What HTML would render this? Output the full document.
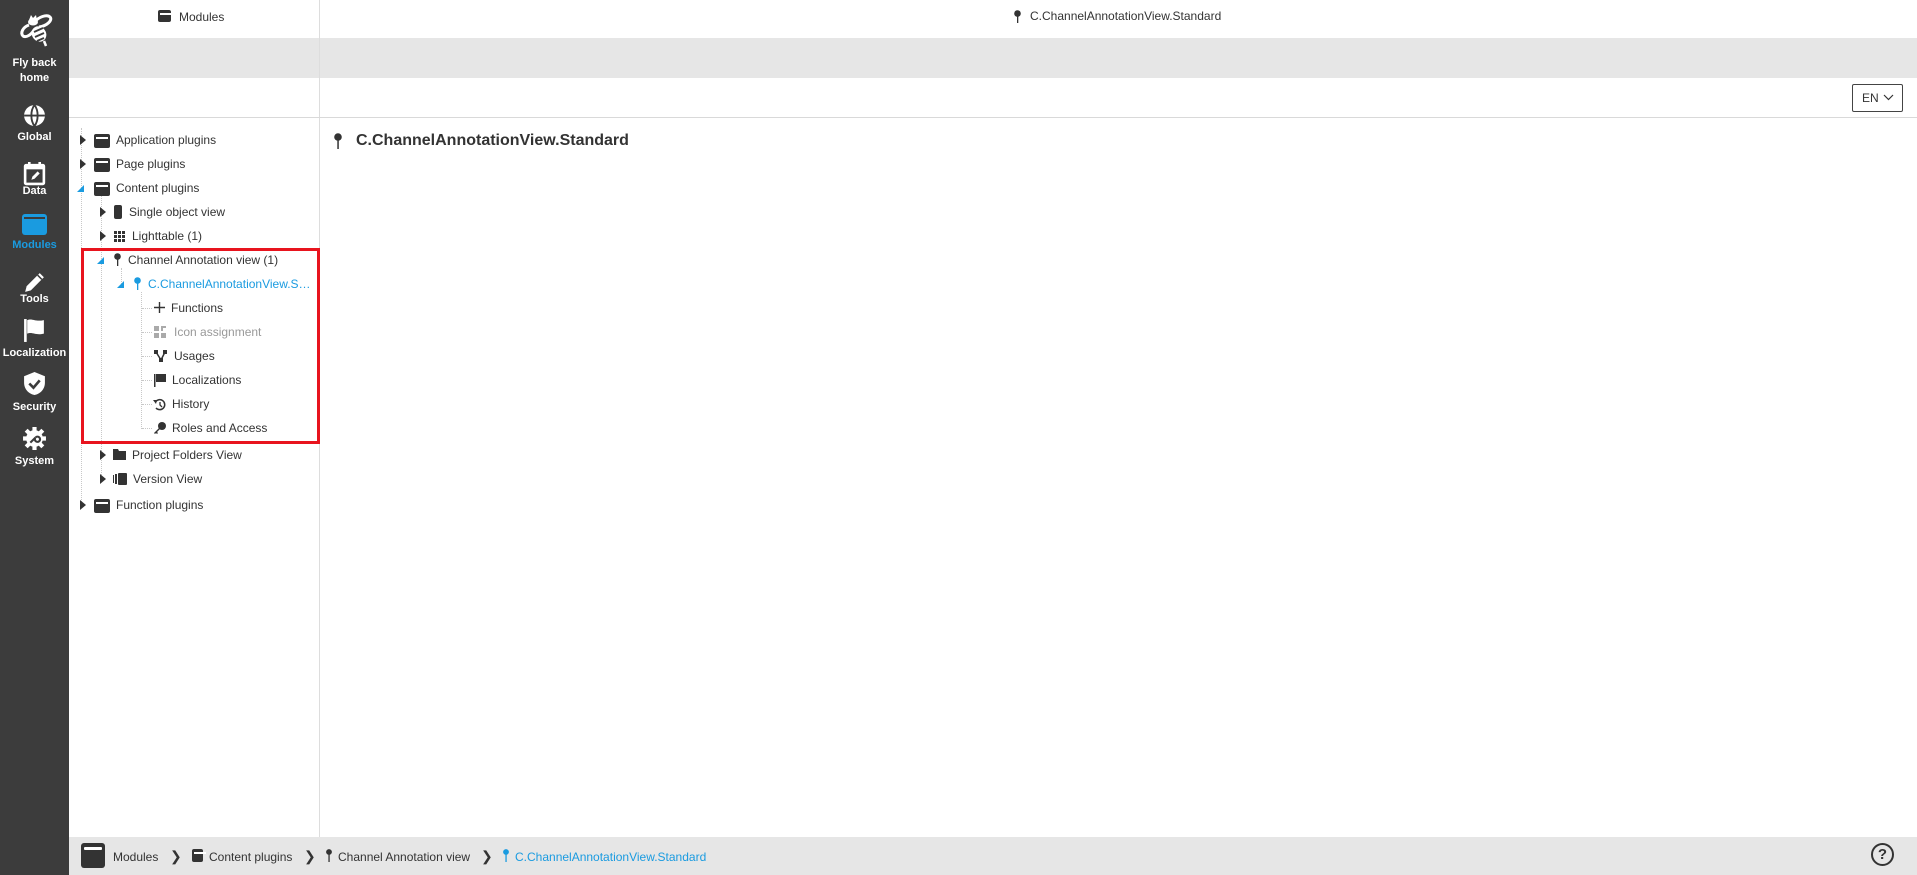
<!DOCTYPE html>
<html><head><meta charset="utf-8"><style>
*{margin:0;padding:0;box-sizing:border-box}
body{width:1917px;height:875px;position:relative;overflow:hidden;background:#fff;font-family:"Liberation Sans",Arial,sans-serif;color:#333}
.a{position:absolute}
#side{left:0;top:0;width:69px;height:875px;background:#3c3c3c}
.sl{position:absolute;left:0;width:69px;text-align:center;color:#fff;font-size:11px;font-weight:bold;line-height:13px}
.si{position:absolute;left:22px;width:25px;height:25px}
.t{position:absolute;font-size:12px;white-space:nowrap;line-height:16px}
.arr{position:absolute;width:0;height:0;border-top:5px solid transparent;border-bottom:5px solid transparent;border-left:6px solid #333}
.opn{position:absolute;width:0;height:0;border-left:7px solid transparent;border-bottom:7px solid #1a9be0}
.mod{position:absolute;width:16px;height:14px;background:#333;border-radius:2px}
.mod:after{content:"";position:absolute;left:2px;top:3px;width:12px;height:2px;background:#fff}
.vl{position:absolute;border-left:1px dotted #c8c8c8}
.hl{position:absolute;border-top:1px dotted #c8c8c8;height:0}
</style></head><body>
<div id="side" class="a">
 <svg class="a" style="left:15px;top:10px" width="40" height="42" viewBox="0 0 40 42">
  <path d="M14 10l2-5 2 3 3-3 1 5z" fill="#fff"/>
  <ellipse cx="18" cy="12" rx="5" ry="3.5" fill="#fff"/>
  <path d="M20 12c3-5 12-8 15-5 3 3-3 9-11 10" fill="none" stroke="#fff" stroke-width="3"/>
  <path d="M14 15c-6 2-9 8-6 11 3 2 8-1 11-6" fill="none" stroke="#fff" stroke-width="3"/>
  <ellipse cx="24" cy="24" rx="7" ry="8" transform="rotate(-35 24 24)" fill="#fff"/>
  <path d="M19 22l9 -4M20 27l9-4M22 31l7-3" stroke="#3c3c3c" stroke-width="1.8"/>
  <path d="M29 31l2 5" stroke="#fff" stroke-width="2.5"/>
 </svg>
 <div class="sl" style="top:57px">Fly back</div>
 <div class="sl" style="top:72px">home</div>
 <svg class="si" style="top:103px" viewBox="0 0 24 24"><circle cx="12" cy="12" r="10" fill="#fff"/><path d="M2 12h20M12 2c-4 5-4 15 0 20M12 2c4 5 4 15 0 20" stroke="#3c3c3c" stroke-width="1.8" fill="none"/></svg>
 <div class="sl" style="top:131px">Global</div>
 <svg class="si" style="top:161px" viewBox="0 0 24 24"><rect x="3" y="4" width="18" height="18" rx="1" fill="none" stroke="#fff" stroke-width="2.5"/><rect x="3" y="4" width="18" height="4" fill="#fff"/><path d="M7 1v5M17 1v5" stroke="#fff" stroke-width="2.5"/><path d="M9 18l1-3 5-5 2 2-5 5z" fill="#fff"/></svg>
 <div class="sl" style="top:185px">Data</div>
 <div class="a" style="left:22px;top:214px;width:25px;height:21px;background:#1a9be0;border-radius:3px"><div class="a" style="left:2px;top:3px;width:21px;height:2px;background:#3c3c3c"></div></div>
 <div class="sl" style="top:239px;color:#1a9be0">Modules</div>
 <svg class="si" style="top:270px" viewBox="0 0 24 24"><path d="M3 21l1.5-5.5L17 3l4 4L8.5 19.5z" fill="#fff"/><path d="M15 5l4 4" stroke="#3c3c3c" stroke-width="1.5"/></svg>
 <div class="sl" style="top:293px">Tools</div>
 <svg class="si" style="top:318px" viewBox="0 0 24 24"><rect x="2" y="1" width="2.5" height="22" fill="#fff"/><path d="M5 2c5-2 8 2 16 0v13c-8 2-11-2-16 0z" fill="#fff"/></svg>
 <div class="sl" style="top:347px">Localization</div>
 <svg class="si" style="top:371px" viewBox="0 0 24 24"><path d="M12 1l10 4v6c0 7-5 11-10 12C7 22 2 18 2 11V5z" fill="#fff"/><path d="M7 12l4 4 6-7" stroke="#3c3c3c" stroke-width="2.5" fill="none"/></svg>
 <div class="sl" style="top:401px">Security</div>
 <svg class="si" style="top:426px" viewBox="0 0 24 24"><circle cx="12" cy="12" r="8" fill="#fff"/><g stroke="#fff" stroke-width="4"><path d="M12 1v4M12 19v4M1 12h4M19 12h4M4 4l3 3M17 17l3 3M4 20l3-3M17 7l3-3"/></g><path d="M8 16l5-5m0 0a2.5 2.5 0 1 0 0.1-0.1" stroke="#3c3c3c" stroke-width="2" fill="none"/></svg>
 <div class="sl" style="top:455px">System</div>
</div>

<div class="a" style="left:69px;top:0;width:1848px;height:38px;background:#fff"></div>
<div class="a" style="left:319px;top:0;width:1px;height:38px;background:#ddd"></div>
<div class="mod" style="left:158px;top:10px;width:13px;height:12px"></div>
<div class="t" style="left:179px;top:9px;font-size:12px">Modules</div>
<svg class="a" style="left:1014px;top:10px" width="7" height="13" viewBox="0 0 7 13"><circle cx="3.5" cy="3.5" r="3.3" fill="#333"/><rect x="3" y="6" width="1.3" height="7" fill="#333"/></svg>
<div class="t" style="left:1030px;top:8px;font-size:12px">C.ChannelAnnotationView.Standard</div>
<div class="a" style="left:69px;top:38px;width:1848px;height:40px;background:#e6e6e6"></div>
<div class="a" style="left:319px;top:38px;width:1px;height:40px;background:#ddd"></div>
<div class="a" style="left:319px;top:78px;width:1px;height:40px;background:#ddd"></div>
<div class="a" style="left:69px;top:117px;width:1848px;height:1px;background:#d9d9d9"></div>
<div class="a" style="left:1852px;top:84px;width:51px;height:28px;border:1px solid #444;border-radius:2px"></div>
<div class="t" style="left:1862px;top:90px;font-size:12px">EN</div>
<svg class="a" style="left:1883px;top:94px" width="11" height="7" viewBox="0 0 11 7"><path d="M1 1l4.5 4.5L10 1" stroke="#333" stroke-width="1.2" fill="none"/></svg>

<div class="a" style="left:319px;top:118px;width:1px;height:719px;background:#ddd"></div>
<div class="vl" style="left:81px;top:128px;height:380px"></div>
<div class="vl" style="left:101px;top:196px;height:285px"></div>
<div class="vl" style="left:121px;top:268px;height:16px"></div>
<div class="vl" style="left:141px;top:292px;height:137px"></div>

<div class="arr" style="left:80px;top:135px"></div><div class="mod" style="left:94px;top:134px"></div><div class="t" style="left:116px;top:132px">Application plugins</div>
<div class="arr" style="left:80px;top:159px"></div><div class="mod" style="left:94px;top:158px"></div><div class="t" style="left:116px;top:156px">Page plugins</div>
<div class="opn" style="left:77px;top:185px"></div><div class="mod" style="left:94px;top:182px"></div><div class="t" style="left:116px;top:180px">Content plugins</div>
<div class="arr" style="left:100px;top:207px"></div><div class="a" style="left:114px;top:205px;width:8px;height:14px;background:#333;border-radius:2px"></div><div class="t" style="left:129px;top:204px">Single object view</div>
<div class="arr" style="left:100px;top:231px"></div>
<svg class="a" style="left:114px;top:231px" width="11" height="11" viewBox="0 0 11 11" fill="#333"><rect x="0" y="0" width="3" height="3"/><rect x="4" y="0" width="3" height="3"/><rect x="8" y="0" width="3" height="3"/><rect x="0" y="4" width="3" height="3"/><rect x="4" y="4" width="3" height="3"/><rect x="8" y="4" width="3" height="3"/><rect x="0" y="8" width="3" height="3"/><rect x="4" y="8" width="3" height="3"/><rect x="8" y="8" width="3" height="3"/></svg>
<div class="t" style="left:132px;top:228px">Lighttable (1)</div>

<div class="a" style="left:81px;top:248px;width:239px;height:196px;border:3px solid #e8141e"></div>
<div class="opn" style="left:97px;top:257px"></div>
<svg class="a" style="left:114px;top:253px" width="7" height="13" viewBox="0 0 7 13"><circle cx="3.5" cy="3.5" r="3.3" fill="#333"/><rect x="3" y="6" width="1.3" height="7" fill="#333"/></svg>
<div class="t" style="left:128px;top:252px">Channel Annotation view (1)</div>
<div class="opn" style="left:117px;top:281px"></div>
<svg class="a" style="left:134px;top:277px" width="7" height="13" viewBox="0 0 7 13"><circle cx="3.5" cy="3.5" r="3.3" fill="#1a9be0"/><rect x="3" y="6" width="1.3" height="7" fill="#1a9be0"/></svg>
<div class="t" style="left:148px;top:276px;color:#1a9be0">C.ChannelAnnotationView.S…</div>

<div class="hl" style="left:142px;top:308px;width:10px"></div>
<svg class="a" style="left:154px;top:302px" width="11" height="11" viewBox="0 0 11 11"><path d="M5.5 0v11M0 5.5h11" stroke="#333" stroke-width="1.4"/></svg>
<div class="t" style="left:171px;top:300px">Functions</div>
<div class="hl" style="left:142px;top:332px;width:10px"></div>
<svg class="a" style="left:154px;top:326px" width="12" height="12" viewBox="0 0 12 12" fill="#aaa"><rect x="0" y="0" width="5" height="5"/><rect x="0" y="7" width="5" height="5"/><rect x="7" y="7" width="5" height="5"/><path d="M7 0h5v2H9v3H7z"/></svg>
<div class="t" style="left:174px;top:324px;color:#999">Icon assignment</div>
<div class="hl" style="left:142px;top:356px;width:10px"></div>
<svg class="a" style="left:154px;top:350px" width="13" height="12" viewBox="0 0 13 12" fill="#333"><rect x="0" y="0" width="4" height="4"/><rect x="9" y="0" width="4" height="4"/><rect x="5" y="8" width="4" height="4"/><path d="M2 2l5 8M11 2l-4 8" stroke="#333" stroke-width="1.5"/></svg>
<div class="t" style="left:174px;top:348px">Usages</div>
<div class="hl" style="left:142px;top:380px;width:10px"></div>
<svg class="a" style="left:154px;top:374px" width="12" height="13" viewBox="0 0 12 13" fill="#333"><rect x="0" y="0" width="1.5" height="13"/><path d="M2 0h10v8H2z"/></svg>
<div class="t" style="left:172px;top:372px">Localizations</div>
<div class="hl" style="left:142px;top:404px;width:10px"></div>
<svg class="a" style="left:153px;top:398px" width="13" height="13" viewBox="0 0 13 13"><path d="M2.5 4A5 5 0 1 1 3 10" stroke="#333" stroke-width="1.5" fill="none"/><path d="M0 2l4 0 -1 4z" fill="#333"/><path d="M7 4v3l2 2" stroke="#333" stroke-width="1.3" fill="none"/></svg>
<div class="t" style="left:172px;top:396px">History</div>
<div class="hl" style="left:142px;top:428px;width:10px"></div>
<svg class="a" style="left:154px;top:422px" width="12" height="12" viewBox="0 0 12 12" fill="#333"><circle cx="8" cy="4" r="4"/><path d="M5 6L0 11l1 1 1-1 1 1 1-1-1-1 3-3z"/></svg>
<div class="t" style="left:172px;top:420px">Roles and Access</div>

<div class="arr" style="left:100px;top:450px"></div>
<svg class="a" style="left:113px;top:449px" width="13" height="11" viewBox="0 0 13 11"><path d="M0 0h5l1 2h7v9H0z" fill="#333"/></svg>
<div class="t" style="left:132px;top:447px">Project Folders View</div>
<div class="arr" style="left:100px;top:474px"></div>
<svg class="a" style="left:113px;top:473px" width="14" height="12" viewBox="0 0 14 12" fill="#333"><rect x="0" y="2" width="1" height="8"/><rect x="2" y="1" width="2" height="10"/><rect x="5" y="0" width="9" height="12" rx="1"/></svg>
<div class="t" style="left:133px;top:471px">Version View</div>
<div class="arr" style="left:80px;top:500px"></div><div class="mod" style="left:94px;top:499px"></div><div class="t" style="left:116px;top:497px">Function plugins</div>

<svg class="a" style="left:334px;top:133px" width="8" height="16" viewBox="0 0 8 16"><circle cx="4" cy="4" r="3.8" fill="#333"/><rect x="3.3" y="7" width="1.5" height="9" fill="#333"/></svg>
<div class="t" style="left:356px;top:131px;font-size:16px;font-weight:bold;line-height:20px">C.ChannelAnnotationView.Standard</div>

<div class="a" style="left:69px;top:837px;width:1848px;height:38px;background:#e6e6e6"></div>
<div class="a" style="left:81px;top:843px;width:24px;height:25px;background:#333;border-radius:3px"><div class="a" style="left:3px;top:4px;width:18px;height:3px;background:#fff;border-radius:1px"></div></div>
<div class="t" style="left:113px;top:849px;font-size:12px">Modules</div>
<div class="t" style="left:170px;top:848px;font-size:14px">&#x276F;</div>
<div class="mod" style="left:192px;top:849px;width:11px;height:13px"></div>
<div class="t" style="left:209px;top:849px;font-size:12px">Content plugins</div>
<div class="t" style="left:304px;top:848px;font-size:14px">&#x276F;</div>
<svg class="a" style="left:326px;top:849px" width="6" height="13" viewBox="0 0 6 13"><circle cx="3" cy="3" r="2.9" fill="#333"/><rect x="2.4" y="5" width="1.3" height="8" fill="#333"/></svg>
<div class="t" style="left:338px;top:849px;font-size:12px">Channel Annotation view</div>
<div class="t" style="left:481px;top:848px;font-size:14px">&#x276F;</div>
<svg class="a" style="left:503px;top:849px" width="6" height="13" viewBox="0 0 6 13"><circle cx="3" cy="3" r="2.9" fill="#1a9be0"/><rect x="2.4" y="5" width="1.3" height="8" fill="#1a9be0"/></svg>
<div class="t" style="left:515px;top:849px;font-size:12px;color:#1a9be0">C.ChannelAnnotationView.Standard</div>
<div class="a" style="left:1871px;top:843px;width:23px;height:23px;border:2px solid #333;border-radius:50%;text-align:center;font-size:15px;font-weight:bold;line-height:19px;color:#333">?</div>
</body></html>
